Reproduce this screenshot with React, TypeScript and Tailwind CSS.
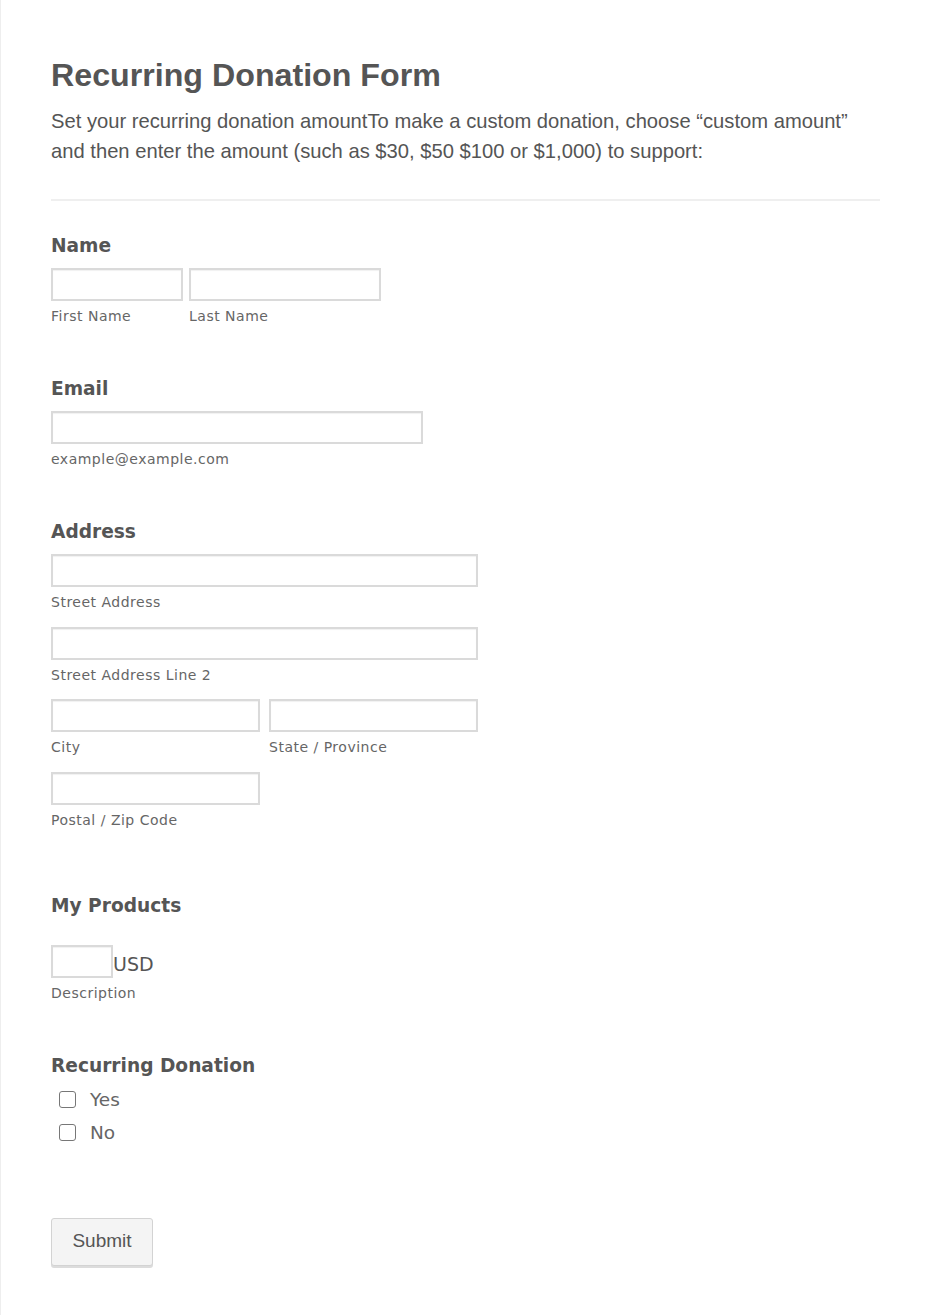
const sans = "font-['Liberation_Sans',Arial,sans-serif]";
const dv = "font-['DejaVu_Sans',Verdana,sans-serif]";

function Input({ w }: { w: string }) {
  return (
    <input
      type="text"
      className={`${w} h-[33px] border-2 border-[#dadada] bg-white shadow-[inset_0_1px_1px_rgba(0,0,0,0.06)] outline-none`}
    />
  );
}

function Sub({ children }: { children: string }) {
  return (
    <div className={`${dv} text-[14px] tracking-[0.5px] text-[#666] mt-[7px] leading-[16px]`}>{children}</div>
  );
}

function Label({ children }: { children: string }) {
  return <div className={`${dv} font-bold text-[18.6px] text-[#555] leading-[24px]`}>{children}</div>;
}

export default function App() {
  return (
    <div className="min-h-[1315px] bg-white border-l border-[#eee]">
      <div className="pl-[50px] pr-[50px] pt-[56px]">
        <h1 className={`${sans} font-bold text-[32.2px] text-[#555] leading-[38px]`}>Recurring Donation Form</h1>
        <p className={`${sans} text-[20.2px] text-[#555] leading-[30px] mt-[12px] w-[820px]`}>
          Set your recurring donation amountTo make a custom donation, choose “custom amount” and then enter the
          amount (such as $30, $50 $100 or $1,000) to support:
        </p>
        <div className="h-[2px] bg-[#efefef] mt-[33px] w-[829px]" />

        <div className="mt-[33px]">
          <Label>Name</Label>
          <div className="flex gap-[6px] mt-[10px]">
            <div>
              <Input w="w-[132px]" />
              <Sub>First Name</Sub>
            </div>
            <div>
              <Input w="w-[192px]" />
              <Sub>Last Name</Sub>
            </div>
          </div>
        </div>

        <div className="mt-[53px]">
          <Label>Email</Label>
          <div className="mt-[10px]">
            <Input w="w-[372px]" />
            <Sub>example@example.com</Sub>
          </div>
        </div>

        <div className="mt-[53px]">
          <Label>Address</Label>
          <div className="mt-[10px] w-[427px] flex flex-col gap-[16.5px]">
            <div>
              <Input w="w-full" />
              <Sub>Street Address</Sub>
            </div>
            <div>
              <Input w="w-full" />
              <Sub>Street Address Line 2</Sub>
            </div>
            <div className="grid grid-cols-2 gap-[9px]">
              <div>
                <Input w="w-full" />
                <Sub>City</Sub>
              </div>
              <div>
                <Input w="w-full" />
                <Sub>State / Province</Sub>
              </div>
            </div>
            <div className="grid grid-cols-2 gap-[9px]">
              <div>
                <Input w="w-full" />
                <Sub>Postal / Zip Code</Sub>
              </div>
            </div>
          </div>
        </div>

        <div className="mt-[66px]">
          <Label>My Products</Label>
          <div className="mt-[27px]">
            <div className="flex items-end">
              <Input w="w-[62px]" />
              <span className={`${dv} text-[19px] text-[#555] leading-[24px] mb-[2px]`}>USD</span>
            </div>
            <Sub>Description</Sub>
          </div>
        </div>

        <div className="mt-[53px]">
          <Label>Recurring Donation</Label>
          <div className="mt-[10px] pl-[8px] flex flex-col gap-[9px]">
            {["Yes", "No"].map((o) => (
              <label key={o} className="flex items-center gap-[14px] h-[24px]">
                <span className="w-[17px] h-[17px] border-[1.5px] border-[#777] rounded-[3px] bg-white" />
                <span className={`${dv} text-[18.5px] text-[#666] leading-[24px]`}>{o}</span>
              </label>
            ))}
          </div>
        </div>

        <button
          className={`${sans} mt-[73px] w-[102px] h-[48px] bg-[#f4f4f4] border border-[#d3d3d3] rounded-[3px] shadow-[0_2px_0_#dcdcdc] text-[19px] text-[#555]`}
        >
          Submit
        </button>
      </div>
    </div>
  );
}
